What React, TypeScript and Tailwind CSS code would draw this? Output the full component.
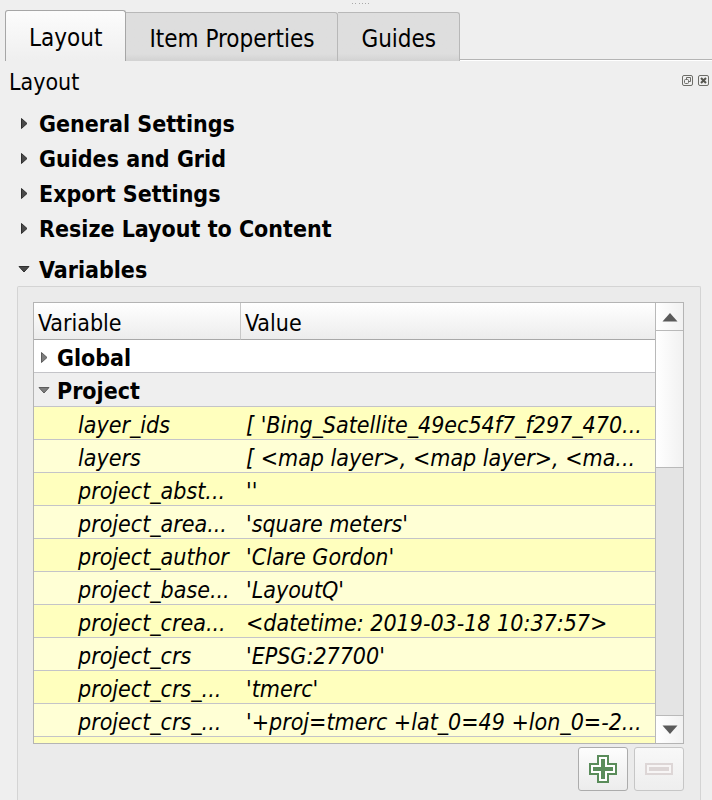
import { useState } from "react";

const tabs = ["Layout", "Item Properties", "Guides"];

const sections = [
  "General Settings",
  "Guides and Grid",
  "Export Settings",
  "Resize Layout to Content",
];

const variables: [string, string][] = [
  ["layer_ids", "[ 'Bing_Satellite_49ec54f7_f297_470..."],
  ["layers", "[ <map layer>, <map layer>, <ma..."],
  ["project_abst...", "''"],
  ["project_area...", "'square meters'"],
  ["project_author", "'Clare Gordon'"],
  ["project_base...", "'LayoutQ'"],
  ["project_crea...", "<datetime: 2019-03-18 10:37:57>"],
  ["project_crs", "'EPSG:27700'"],
  ["project_crs_...", "'tmerc'"],
  ["project_crs_...", "'+proj=tmerc +lat_0=49 +lon_0=-2..."],
];

function Arrow({ open, muted }: { open?: boolean; muted?: boolean }) {
  const fill = muted ? "#7d7d7d" : "#4a4a4a";
  const stroke = muted ? "#5c5c5c" : "#2f2f2f";
  return (
    <svg width="12" height="12" viewBox="0 0 12 12" className="shrink-0" aria-hidden="true">
      <path
        d={open ? "M1 2.500H11L6 8Z" : "M3.500 0.500L9 5.500L3.500 10.500Z"}
        fill={fill}
        stroke={stroke}
        strokeWidth="1"
      />
    </svg>
  );
}

function SectionHeader({ title, open }: { title: string; open?: boolean }) {
  return (
    <button
      type="button"
      aria-expanded={!!open}
      className="flex h-[35px] items-center gap-[9px] pt-[2px] text-left font-bold whitespace-nowrap"
    >
      <Arrow open={open} />
      {title}
    </button>
  );
}

function ScrollBar() {
  return (
    <div className="flex w-[27px] shrink-0 flex-col bg-[#e4e4e4]">
      <button
        type="button"
        aria-label="Scroll up"
        className="flex h-7 items-center justify-center border-b border-[#b9b9b9] bg-linear-to-r from-white to-[#f1f1f1]"
      >
        <svg width="16" height="10" viewBox="0 0 16 10" aria-hidden="true">
          <path d="M0.500 9.500L8 1L15.500 9.500Z" fill="#5a5a5a" />
        </svg>
      </button>
      <div className="h-[137px] border-b border-[#b9b9b9] bg-linear-to-r from-white to-[#f1f1f1]" />
      <div className="flex-1" />
      <button
        type="button"
        aria-label="Scroll down"
        className="flex h-7 items-center justify-center border-t border-[#b9b9b9] bg-linear-to-r from-white to-[#f1f1f1]"
      >
        <svg width="16" height="10" viewBox="0 0 16 10" aria-hidden="true">
          <path d="M0.500 0.500L8 9L15.500 0.500Z" fill="#5a5a5a" />
        </svg>
      </button>
    </div>
  );
}

function VariableTable() {
  return (
    <div className="flex h-[442px] border border-[#b4b4b4] bg-white">
      <div className="min-w-0 flex-1 overflow-hidden border-r border-[#b9b9b9]">
        <table className="w-full table-fixed border-separate border-spacing-0 text-left whitespace-nowrap">
          <colgroup>
            <col className="w-[207px]" />
            <col />
          </colgroup>
          <thead>
            <tr className="h-[37px] bg-linear-to-b from-white to-[#ececec]">
              <th className="border-r border-b border-r-[#c8c8c8] border-b-[#a8a8a8] px-1 pt-[3px] pb-0 font-normal">
                Variable
              </th>
              <th className="border-b border-[#a8a8a8] px-1 pt-[3px] pb-0 font-normal">Value</th>
            </tr>
          </thead>
          <tbody>
            <tr className="h-[33px]">
              <th colSpan={2} className="border-b border-[#c4c4c8] px-1 pt-[3px] pb-0 font-bold">
                <button type="button" aria-expanded={false} className="flex items-center gap-[7px]">
                  <Arrow muted />
                  Global
                </button>
              </th>
            </tr>
            <tr className="h-[34px] bg-[#efefef]">
              <th colSpan={2} className="border-b border-[#c4c4c8] px-1 pt-[2px] pb-0 font-bold">
                <button type="button" aria-expanded className="flex items-center gap-[7px]">
                  <Arrow open muted />
                  Project
                </button>
              </th>
            </tr>
            {variables.map(([name, value], i) => (
              <tr key={i} className="h-[33px] italic odd:bg-[#ffffbe] even:bg-[#ffffd5]">
                <td className="overflow-hidden border-b border-[#c4c4c8] pt-[3px] pb-0 pl-11">{name}</td>
                <td className="overflow-hidden border-b border-[#c4c4c8] pt-[3px] pb-0 pl-[5px]">
                  {value}
                </td>
              </tr>
            ))}
            <tr className="h-[33px] bg-[#ffffbe]">
              <td colSpan={2} />
            </tr>
          </tbody>
        </table>
      </div>
      <ScrollBar />
    </div>
  );
}

export default function App() {
  const [active, setActive] = useState(0);

  return (
    <main className="flex h-screen min-w-[480px] flex-col overflow-hidden bg-[#efefef] font-['DejaVu_Sans_Condensed','DejaVu_Sans',sans-serif] text-[23px] leading-7 text-black">
      <div className="flex h-[10px] justify-center pt-[3px] pl-2" aria-hidden="true">
        <svg width="18" height="1" viewBox="0 0 18 1">
          <path d="M1 .5H6M8 .5H18" stroke="#a9a9a9" strokeDasharray="1 2" />
        </svg>
      </div>

      <div role="tablist" className="flex h-[51px] items-end pl-[5px] text-[24px] leading-7">
        {tabs.map((tab, i) => (
          <button
            key={tab}
            type="button"
            role="tab"
            aria-selected={i === active}
            onClick={() => setActive(i)}
            className={
              i === active
                ? "h-[51px] rounded-t-[3px] border border-b-0 border-[#a6a6a6] bg-linear-to-b from-[#fcfcfc] to-[#efefef] px-[23px] pt-1 whitespace-nowrap"
                : "h-[49px] rounded-tr-[3px] border border-b-0 border-l-0 border-[#b8b8b8] bg-linear-to-b from-[#dedede] from-85% to-[#d2d2d2] px-[23px] pt-1 whitespace-nowrap"
            }
          >
            {tab}
          </button>
        ))}
        <div className="h-[2px] flex-1 border-t border-[#b4b4b4] bg-white" />
      </div>

      <div className="flex h-[42px] items-center justify-between pr-[3px] pl-[9px]">
        <h1>Layout</h1>
        <div className="flex gap-[5px] pb-1">
          <button type="button" aria-label="Float panel">
            <svg width="11" height="11" viewBox="0 0 11 11" fill="none" stroke="#6d6d68">
              <rect x=".5" y=".5" width="10" height="10" rx="1.500" />
              <path d="M4.500 4V2.500H8.500V6.500H7" />
              <rect x="2.500" y="4.500" width="4" height="4" rx="1" />
            </svg>
          </button>
          <button type="button" aria-label="Close panel">
            <svg width="11" height="11" viewBox="0 0 11 11" fill="none" stroke="#6d6d68">
              <rect x=".5" y=".5" width="10" height="10" rx="1.500" />
              <path d="M3 3L8 8M8 3L3 8" stroke="#55554f" strokeWidth="2" />
            </svg>
          </button>
        </div>
      </div>

      <div className="flex flex-col items-start pt-[2px] pl-[18px]">
        {sections.map((title) => (
          <SectionHeader key={title} title={title} />
        ))}
      </div>

      <section className="mt-[6px] flex flex-1 flex-col">
        <div className="pl-[18px]">
          <SectionHeader title="Variables" open />
        </div>
        <div className="mr-[11px] ml-[17px] flex-1 rounded-t-[2px] border border-b-0 border-[#d4d4d4] bg-[#ebebeb] pt-[15px] pr-4 pl-[15px]">
          <VariableTable />
          <div className="mt-[3px] flex justify-end gap-[6px]">
            <button
              type="button"
              aria-label="Add variable"
              className="flex h-11 w-[50px] items-center justify-center rounded-[3px] border border-[#acacac] bg-linear-to-b from-[#fdfdfd] to-[#ececec]"
            >
              <svg width="28" height="28" viewBox="0 0 28 28" aria-hidden="true">
                <path
                  d="M9 1H19V9H27V19H19V27H9V19H1V9H9Z"
                  fill="#fff"
                  stroke="#5a8c5a"
                  strokeWidth="2"
                />
                <path d="M14 4V24M4 14H24" stroke="#5a8c5a" strokeWidth="4" />
              </svg>
            </button>
            <button
              type="button"
              aria-label="Remove variable"
              disabled
              className="flex h-11 w-[50px] items-center justify-center rounded-[3px] border border-[#c6c6c6] bg-linear-to-b from-[#f8f8f8] to-[#eeeeee]"
            >
              <svg width="28" height="12" viewBox="0 0 28 12" aria-hidden="true">
                <rect x="1" y="1" width="26" height="10" fill="#f7f5f5" stroke="#ddd6d6" strokeWidth="2" />
                <path d="M4 6H24" stroke="#ddd6d6" strokeWidth="4" />
              </svg>
            </button>
          </div>
        </div>
      </section>
    </main>
  );
}
